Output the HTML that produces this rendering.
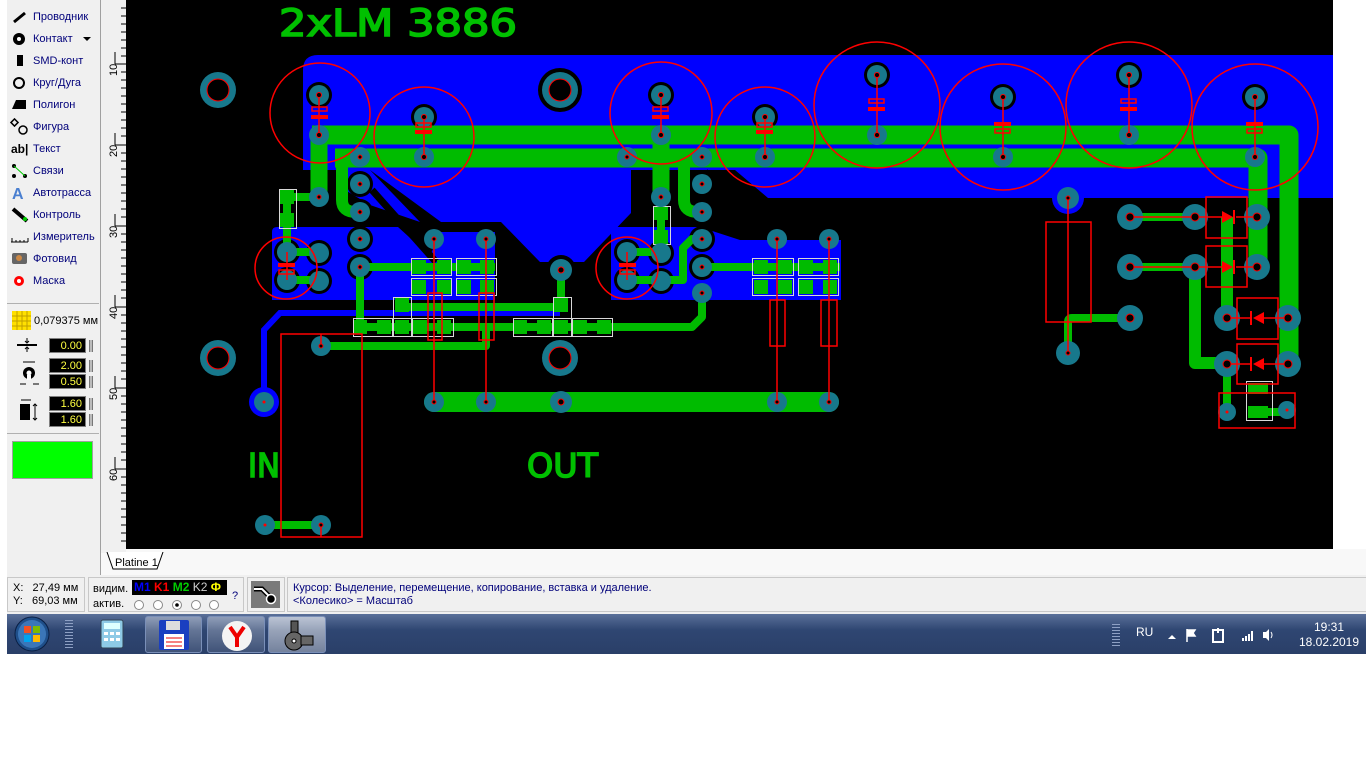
<!DOCTYPE html>
<html><head><meta charset="utf-8"><style>
*{margin:0;padding:0;box-sizing:border-box}
body{width:1366px;height:768px;background:#fff;position:relative;overflow:hidden;font-family:"Liberation Sans","DejaVu Sans",sans-serif}
.abs{position:absolute}
#left{left:7px;top:0;width:94px;height:575px;background:#f0f0f0;border-right:1px solid #a0a0a0}
.mi{position:absolute;left:26px;font-size:11px;color:#00007a}
.fld{position:absolute;left:42px;width:37px;height:15px;background:#000;color:#ffff40;font-size:11px;text-align:right;padding-right:3px;line-height:15px;border:1px solid #808080}
.sl{position:absolute;left:82px;width:4px;height:12px;background:linear-gradient(90deg,#555,#ddd,#555)}
#status{left:7px;top:575px;width:1359px;height:39px;background:#f0f0f0;font-size:11px}
.box{position:absolute;top:2px;height:35px;border:1px solid #c8c8c8}
#task{left:7px;top:614px;width:1359px;height:40px;background:linear-gradient(180deg,#5a7099 0%,#2f4672 40%,#2a3f68 100%)}
.tb{position:absolute;top:2px;height:37px;border:1px solid #7a8fb8;border-radius:3px;background:linear-gradient(180deg,rgba(255,255,255,.35),rgba(255,255,255,.1))}
</style></head><body>

<div id="left" class="abs">
  <svg class="abs" style="left:0;top:0" width="94" height="300">
    <line x1="7" y1="22" x2="18" y2="13" stroke="#000" stroke-width="3"/>
    <circle cx="12" cy="39" r="6" fill="#000"/><circle cx="12" cy="39" r="2" fill="#fff"/>
    <path d="M76 37 h8 l-4 4z" fill="#000"/>
    <rect x="10" y="55" width="6" height="11" fill="#000"/>
    <circle cx="12" cy="83" r="5" fill="none" stroke="#000" stroke-width="2"/>
    <path d="M5 109 L9 100 H19 V109 Z" fill="#000"/>
    <rect x="5" y="120" width="5" height="5" transform="rotate(45 7.5 122.5)" fill="none" stroke="#000" stroke-width="1.5"/>
    <circle cx="16" cy="130" r="4" fill="none" stroke="#000" stroke-width="1.5"/>
    <text x="4" y="153" font-size="12" font-weight="bold" font-family="Liberation Sans">ab|</text>
    <circle cx="7" cy="166" r="2" fill="#000"/><circle cx="7" cy="176" r="2" fill="#000"/><circle cx="18" cy="176" r="2" fill="#000"/><line x1="7" y1="166" x2="18" y2="176" stroke="#0c0"/>
    <text x="5" y="199" font-size="16" font-weight="bold" fill="#4a7fd0" font-family="Liberation Sans">A</text>
    <line x1="6" y1="209" x2="20" y2="221" stroke="#000" stroke-width="4"/><circle cx="18" cy="219" r="2" fill="#0c0"/>
    <path d="M4 242 H21 M5 242 V238 M9 242 V240 M13 242 V240 M17 242 V240 M21 242 V238" stroke="#000" stroke-width="1"/>
    <rect x="5" y="253" width="15" height="11" rx="2" fill="#666"/><circle cx="12" cy="258" r="3" fill="#c84"/>
    <circle cx="12" cy="281" r="5" fill="#f00"/><circle cx="12" cy="281" r="2" fill="#fff"/>
  </svg>
  <div class="mi" style="top:11px">Проводник</div>
  <div class="mi" style="top:33px">Контакт</div>
  <div class="mi" style="top:55px">SMD-конт</div>
  <div class="mi" style="top:77px">Круг/Дуга</div>
  <div class="mi" style="top:99px">Полигон</div>
  <div class="mi" style="top:121px">Фигура</div>
  <div class="mi" style="top:143px">Текст</div>
  <div class="mi" style="top:165px">Связи</div>
  <div class="mi" style="top:187px">Автотрасса</div>
  <div class="mi" style="top:209px">Контроль</div>
  <div class="mi" style="top:231px">Измеритель</div>
  <div class="mi" style="top:253px">Фотовид</div>
  <div class="mi" style="top:275px">Маска</div>
  <div class="abs" style="left:0;top:303px;width:92px;border-top:1px solid #b0b0b0"></div>
  <svg class="abs" style="left:5px;top:311px" width="20" height="20"><rect width="19" height="19" fill="#ffe000"/><path d="M0 5H19M0 10H19M0 15H19M5 0V19M10 0V19M15 0V19" stroke="#c0a000"/></svg>
  <div class="abs" style="left:27px;top:315px;font-size:11px;color:#000">0,079375 мм</div>
  <svg class="abs" style="left:8px;top:336px" width="30" height="92">
    <line x1="2" y1="9" x2="22" y2="9" stroke="#000" stroke-width="2"/><path d="M12 2v4M10 5l2 2 2-2M12 16v-4M10 13l2-2 2 2" stroke="#000" fill="none"/>
    <circle cx="14" cy="37" r="6" fill="#000"/><circle cx="14" cy="37" r="2.5" fill="#fff"/><rect x="12" y="39" width="4" height="5" fill="#fff"/>
    <path d="M8 26h12M5 48h6M18 48h6" stroke="#000"/>
    <rect x="5" y="68" width="10" height="16" fill="#000"/><path d="M20 68v16M18 70l2-2 2 2M18 82l2 2 2-2M6 64h10" stroke="#000" fill="none"/>
  </svg>
  <div class="fld" style="top:338px">0.00</div><div class="sl" style="top:340px"></div>
  <div class="fld" style="top:358px">2.00</div><div class="sl" style="top:360px"></div>
  <div class="fld" style="top:374px">0.50</div><div class="sl" style="top:376px"></div>
  <div class="fld" style="top:396px">1.60</div><div class="sl" style="top:398px"></div>
  <div class="fld" style="top:412px">1.60</div><div class="sl" style="top:414px"></div>
  <div class="abs" style="left:0;top:433px;width:92px;border-top:1px solid #b0b0b0"></div>
  <div class="abs" style="left:5px;top:441px;width:81px;height:38px;background:#00ff00;border:1px solid #a0a0a0"></div>
</div>

<svg class="abs" style="left:101px;top:0" width="25" height="549">
  <rect width="25" height="549" fill="#f0f0f0"/>
  <g stroke="#000">
    <path d="M20 8h5M20 16h5M20 24h5M20 32h5M20 40h5M20 48h5M14 64h11M20 56h5M20 72h5M20 80h5M20 88h5M20 96h5M20 104h5M20 112h5M20 120h5M20 128h5M20 136h5M14 145h11M20 153h5M20 161h5M20 169h5M20 177h5M20 185h5M20 193h5M20 201h5M20 209h5M20 217h5M14 226h11M20 234h5M20 242h5M20 250h5M20 258h5M20 266h5M20 274h5M20 282h5M20 290h5M20 298h5M14 307h11M20 315h5M20 323h5M20 331h5M20 339h5M20 347h5M20 355h5M20 363h5M20 371h5M20 379h5M14 388h11M20 396h5M20 404h5M20 412h5M20 420h5M20 428h5M20 436h5M20 444h5M20 452h5M20 460h5M14 469h11M20 477h5M20 485h5M20 493h5M20 501h5M20 509h5M20 517h5M20 525h5M20 533h5M20 541h5"/>
    <path d="M14 52v12M14 133v12M14 214v12M14 295v12M14 376v12M14 457v12"/>
  </g>
  <g font-size="11" fill="#000" font-family="Liberation Sans">
    <text transform="translate(16,76) rotate(-90)">10</text>
    <text transform="translate(16,157) rotate(-90)">20</text>
    <text transform="translate(16,238) rotate(-90)">30</text>
    <text transform="translate(16,319) rotate(-90)">40</text>
    <text transform="translate(16,400) rotate(-90)">50</text>
    <text transform="translate(16,481) rotate(-90)">60</text>
  </g>
</svg>

<svg class="abs" style="left:0;top:0" width="1366" height="549">
  <rect x="126" y="0" width="1207" height="549" fill="#000"/>
  <g fill="#0000ff">
    <path d="M318 55 H1333 V198 H768 L735 170 H631 V213 L584 262 H540 L501 222 H441 L370 170 H303 V70 Q303 55 318 55Z"/>
    <path d="M272 232 Q272 227 277 227 H398 L430 256 L440 232 H495 V300 H272Z"/>
    <path d="M611 227 H700 L740 240 H841 V300 H611Z"/>
    <path d="M345 170 H370 L420 222 L370 205 L345 190Z"/>
  </g>
  <g fill="none" stroke="#000" stroke-width="7">
    <path d="M705 172 L780 237"/>
    <path d="M372 190 L436 262"/>
  </g>
  <path d="M264 402 V330 L280 313 H560" fill="none" stroke="#0000ff" stroke-width="6"/>
  <circle cx="264" cy="402" r="15" fill="#0000ff"/>
  <circle cx="1068" cy="198" r="16" fill="#0000ff"/>
  <g fill="#000">
    <circle cx="319" cy="95" r="13"/><circle cx="424" cy="117" r="13"/><circle cx="661" cy="95" r="13"/><circle cx="765" cy="117" r="13"/>
    <circle cx="877" cy="75" r="13"/><circle cx="1003" cy="97" r="13"/><circle cx="1129" cy="75" r="13"/><circle cx="1255" cy="97" r="13"/>
    <circle cx="560" cy="90" r="22"/><circle cx="561" cy="270" r="15"/>
    <circle cx="360" cy="184" r="13"/><circle cx="360" cy="212" r="13"/><circle cx="360" cy="239" r="13"/><circle cx="360" cy="267" r="13"/>
    <circle cx="702" cy="184" r="13"/><circle cx="702" cy="212" r="13"/><circle cx="702" cy="239" r="13"/><circle cx="702" cy="267" r="13"/>
    <circle cx="319" cy="253" r="13"/><circle cx="319" cy="281" r="13"/><circle cx="287" cy="252" r="13"/><circle cx="287" cy="280" r="13"/>
    <circle cx="627" cy="252" r="13"/><circle cx="627" cy="280" r="13"/><circle cx="661" cy="253" r="13"/><circle cx="661" cy="281" r="13"/>
  </g>
  <g fill="none" stroke="#00bb00" stroke-linejoin="round">
    <path d="M312 135 H1289 V368" stroke-width="19"/>
    <path d="M335 158 H1258 V267" stroke-width="19"/>
    <path d="M319 135 V197" stroke-width="17"/>
    <path d="M661 135 V197" stroke-width="17"/>
    <path d="M342 160 V200 Q342 212 356 212" stroke-width="12"/>
    <path d="M684 160 V200 Q684 212 698 212" stroke-width="12"/>
    <path d="M434 402 H829" stroke-width="20" stroke-linecap="round"/>
    <path d="M1227 217 V318" stroke-width="12"/>
    <path d="M1195 267 V363 H1227" stroke-width="12"/>
    <g stroke-width="8">
      <path d="M287 197 H319 M287 197 V252 M287 252 H319 M287 280 H319"/>
      <path d="M360 267 H495 M360 267 V327 H692 L702 317 V293"/>
      <path d="M400 307 H561 V270"/>
      <path d="M321 346 H486 V327"/>
      <path d="M627 252 H661 M627 280 H683 V248 L692 239 H702"/>
      <path d="M702 267 H840"/>
      <path d="M661 197 V245"/>
      <path d="M1130 217 H1195 M1130 267 H1195"/>
      <path d="M1068 353 V322 Q1068 318 1072 318 H1130"/>
      <path d="M265 525 H321"/>
      <path d="M1227 364 V412"/>
      <path d="M1258 412 H1287"/>
    </g>
  </g>
  <g fill="#00bb00">
    <rect x="280" y="190" width="14" height="14"/><rect x="280" y="213" width="14" height="14"/>
    <rect x="654" y="206" width="14" height="14"/><rect x="654" y="230" width="14" height="14"/>
    <rect x="412" y="260" width="14" height="14"/><rect x="437" y="260" width="14" height="14"/><rect x="457" y="260" width="14" height="14"/><rect x="480" y="260" width="14" height="14"/>
    <rect x="412" y="280" width="14" height="14"/><rect x="437" y="280" width="14" height="14"/><rect x="457" y="280" width="14" height="14"/><rect x="480" y="280" width="14" height="14"/>
    <rect x="754" y="260" width="14" height="14"/><rect x="778" y="260" width="14" height="14"/><rect x="799" y="260" width="14" height="14"/><rect x="823" y="260" width="14" height="14"/>
    <rect x="754" y="280" width="14" height="14"/><rect x="778" y="280" width="14" height="14"/><rect x="799" y="280" width="14" height="14"/><rect x="823" y="280" width="14" height="14"/>
    <rect x="353" y="320" width="14" height="14"/><rect x="377" y="320" width="14" height="14"/><rect x="395" y="320" width="14" height="14"/><rect x="413" y="320" width="14" height="14"/><rect x="437" y="320" width="14" height="14"/>
    <rect x="513" y="320" width="14" height="14"/><rect x="537" y="320" width="14" height="14"/><rect x="554" y="320" width="14" height="14"/><rect x="573" y="320" width="14" height="14"/><rect x="597" y="320" width="14" height="14"/>
    <rect x="395" y="298" width="14" height="14"/><rect x="554" y="298" width="14" height="14"/>
    <rect x="1248" y="383" width="20" height="11"/><rect x="1248" y="406" width="20" height="12"/>
  </g>
  <g fill="none" stroke="#d8d8d8" stroke-width="1">
    <rect x="279.5" y="189.5" width="17" height="39"/><rect x="653.5" y="206.5" width="17" height="38"/>
    <rect x="411.5" y="258.5" width="40" height="17"/><rect x="456.5" y="258.5" width="40" height="17"/>
    <rect x="411.5" y="278.5" width="40" height="17"/><rect x="456.5" y="278.5" width="40" height="17"/>
    <rect x="752.5" y="258.5" width="41" height="17"/><rect x="798.5" y="258.5" width="40" height="17"/>
    <rect x="752.5" y="278.5" width="41" height="17"/><rect x="798.5" y="278.5" width="40" height="17"/>
    <rect x="353.5" y="318.5" width="39" height="18"/><rect x="393.5" y="318.5" width="18" height="18"/><rect x="412.5" y="318.5" width="41" height="18"/>
    <rect x="513.5" y="318.5" width="39" height="18"/><rect x="553.5" y="318.5" width="18" height="18"/><rect x="572.5" y="318.5" width="40" height="18"/>
    <rect x="393.5" y="297.5" width="18" height="21"/><rect x="553.5" y="297.5" width="18" height="21"/>
    <rect x="1246.5" y="381.5" width="26" height="39"/>
  </g>
  <g>
    <circle cx="218" cy="90" r="18" fill="#17788c"/><circle cx="218" cy="90" r="11" fill="#000" stroke="#f00"/>
    <circle cx="560" cy="90" r="18" fill="#17788c"/><circle cx="560" cy="90" r="11" fill="#000" stroke="#f00"/>
    <circle cx="218" cy="358" r="18" fill="#17788c"/><circle cx="218" cy="358" r="11" fill="#000" stroke="#f00"/>
    <circle cx="560" cy="358" r="18" fill="#17788c"/><circle cx="560" cy="358" r="11" fill="#000" stroke="#f00"/>
  </g>
  <g fill="#17788c">
    <circle cx="319" cy="95" r="10"/><circle cx="319" cy="135" r="10"/><circle cx="424" cy="117" r="10"/><circle cx="424" cy="157" r="10"/>
    <circle cx="661" cy="95" r="10"/><circle cx="661" cy="135" r="10"/><circle cx="765" cy="117" r="10"/><circle cx="765" cy="157" r="10"/>
    <circle cx="877" cy="75" r="10"/><circle cx="877" cy="135" r="10"/><circle cx="1003" cy="97" r="10"/><circle cx="1003" cy="157" r="10"/>
    <circle cx="1129" cy="75" r="10"/><circle cx="1129" cy="135" r="10"/><circle cx="1255" cy="97" r="10"/><circle cx="1255" cy="157" r="10"/>
    <circle cx="360" cy="157" r="10"/><circle cx="360" cy="184" r="10"/><circle cx="360" cy="212" r="10"/><circle cx="360" cy="239" r="10"/><circle cx="360" cy="267" r="10"/>
    <circle cx="319" cy="197" r="10"/><circle cx="319" cy="253" r="10"/><circle cx="319" cy="281" r="10"/><circle cx="287" cy="252" r="10"/><circle cx="287" cy="280" r="10"/>
    <circle cx="434" cy="239" r="10"/><circle cx="486" cy="239" r="10"/><circle cx="561" cy="270" r="11"/>
    <circle cx="561" cy="402" r="11"/><circle cx="434" cy="402" r="10"/><circle cx="486" cy="402" r="10"/><circle cx="777" cy="402" r="10"/><circle cx="829" cy="402" r="10"/>
    <circle cx="321" cy="346" r="10"/><circle cx="264" cy="402" r="10"/>
    <circle cx="627" cy="157" r="10"/><circle cx="702" cy="157" r="10"/><circle cx="702" cy="184" r="10"/><circle cx="702" cy="212" r="10"/><circle cx="702" cy="239" r="10"/><circle cx="702" cy="267" r="10"/><circle cx="702" cy="293" r="10"/>
    <circle cx="661" cy="197" r="10"/><circle cx="661" cy="253" r="10"/><circle cx="661" cy="281" r="10"/><circle cx="627" cy="252" r="10"/><circle cx="627" cy="280" r="10"/>
    <circle cx="777" cy="239" r="10"/><circle cx="829" cy="239" r="10"/>
    <circle cx="1068" cy="198" r="11"/><circle cx="1068" cy="353" r="12"/>
    <circle cx="1130" cy="217" r="13"/><circle cx="1195" cy="217" r="13"/><circle cx="1257" cy="217" r="13"/>
    <circle cx="1130" cy="267" r="13"/><circle cx="1195" cy="267" r="13"/><circle cx="1257" cy="267" r="13"/>
    <circle cx="1130" cy="318" r="13"/>
    <circle cx="1227" cy="318" r="13"/><circle cx="1288" cy="318" r="13"/><circle cx="1227" cy="364" r="13"/><circle cx="1288" cy="364" r="13"/>
    <circle cx="1227" cy="412" r="9"/><circle cx="1287" cy="410" r="9"/>
    <circle cx="265" cy="525" r="10"/><circle cx="321" cy="525" r="10"/>
  </g>
  <g fill="none" stroke="#ff0000" stroke-width="1.5">
    <circle cx="320" cy="113" r="50"/><circle cx="424" cy="137" r="50"/><circle cx="661" cy="113" r="51"/><circle cx="765" cy="137" r="50"/>
    <circle cx="877" cy="105" r="63"/><circle cx="1003" cy="127" r="63"/><circle cx="1129" cy="105" r="63"/><circle cx="1255" cy="127" r="63"/>
    <circle cx="286" cy="268" r="31"/><circle cx="627" cy="268" r="31"/>
    <rect x="281" y="334" width="81" height="203"/>
    <rect x="428" y="293" width="14" height="47"/><rect x="479" y="293" width="15" height="47"/>
    <rect x="770" y="300" width="15" height="46"/><rect x="821" y="300" width="16" height="46"/>
    <rect x="1046" y="222" width="45" height="100"/>
    <rect x="1206" y="197" width="41" height="41"/><rect x="1206" y="246" width="41" height="41"/>
    <rect x="1237" y="298" width="41" height="41"/><rect x="1237" y="344" width="41" height="40"/>
    <rect x="1219" y="393" width="76" height="35"/>
    <path d="M319 95V135M424 117V157M661 95V135M765 117V157M877 75V135M1003 97V157M1129 75V135M1255 97V157"/>
    <path d="M434 239V402M486 239V402M777 239V402M829 239V402M1068 198V353M321 334V346M321 525V537"/>
    <path d="M287 252V280M627 252V280"/>
    <path d="M1130 217H1206M1247 217H1257M1130 267H1206M1247 267H1257M1227 318H1237M1278 318H1288M1227 364H1237M1278 364H1288"/>
    <path d="M1206 217H1222M1236 217H1247M1206 267H1222M1236 267H1247M1237 318H1250M1264 318H1278M1237 364H1250M1264 364H1278"/>
  </g>
  <g fill="#ff0000">
    <rect x="311" y="115" width="17" height="4"/><rect x="415" y="130" width="17" height="4"/><rect x="652" y="115" width="17" height="4"/><rect x="756" y="130" width="17" height="4"/>
    <rect x="868" y="107" width="17" height="4"/><rect x="994" y="122" width="17" height="4"/><rect x="1120" y="107" width="17" height="4"/><rect x="1246" y="122" width="17" height="4"/>
    <rect x="278" y="263" width="17" height="4"/><rect x="619" y="263" width="17" height="4"/>
    <path d="M1222 211 L1233 217 L1222 223Z M1222 261 L1233 267 L1222 273Z M1264 312 L1253 318 L1264 324Z M1264 358 L1253 364 L1264 370Z"/>
    <rect x="1233" y="210" width="2" height="14"/><rect x="1233" y="260" width="2" height="14"/><rect x="1250" y="311" width="2" height="14"/><rect x="1250" y="357" width="2" height="14"/>
  </g>
  <g fill="none" stroke="#ff0000" stroke-width="1.5">
    <rect x="312" y="107" width="15" height="4"/><rect x="416" y="123" width="15" height="4"/><rect x="653" y="107" width="15" height="4"/><rect x="757" y="123" width="15" height="4"/>
    <rect x="869" y="99" width="15" height="4"/><rect x="995" y="129" width="15" height="4"/><rect x="1121" y="99" width="15" height="4"/><rect x="1247" y="129" width="15" height="4"/>
    <rect x="279" y="270" width="15" height="4"/><rect x="620" y="270" width="15" height="4"/>
  </g>
  <g fill="#000" stroke="#f00" stroke-width="1">
    <circle cx="319" cy="95" r="2.5"/><circle cx="319" cy="135" r="2.5"/><circle cx="424" cy="117" r="2.5"/><circle cx="424" cy="157" r="2.5"/>
    <circle cx="661" cy="95" r="2.5"/><circle cx="661" cy="135" r="2.5"/><circle cx="765" cy="117" r="2.5"/><circle cx="765" cy="157" r="2.5"/>
    <circle cx="877" cy="75" r="2.5"/><circle cx="877" cy="135" r="2.5"/><circle cx="1003" cy="97" r="2.5"/><circle cx="1003" cy="157" r="2.5"/>
    <circle cx="1129" cy="75" r="2.5"/><circle cx="1129" cy="135" r="2.5"/><circle cx="1255" cy="97" r="2.5"/><circle cx="1255" cy="157" r="2.5"/>
    <circle cx="360" cy="157" r="2"/><circle cx="360" cy="184" r="2"/><circle cx="360" cy="212" r="2"/><circle cx="360" cy="239" r="2"/><circle cx="360" cy="267" r="2"/>
    <circle cx="319" cy="197" r="2"/><circle cx="434" cy="239" r="2"/><circle cx="486" cy="239" r="2"/><circle cx="561" cy="270" r="3"/>
    <circle cx="561" cy="402" r="3"/><circle cx="434" cy="402" r="2"/><circle cx="486" cy="402" r="2"/><circle cx="777" cy="402" r="2"/><circle cx="829" cy="402" r="2"/>
    <circle cx="321" cy="346" r="2"/><circle cx="627" cy="157" r="2"/><circle cx="702" cy="157" r="2"/><circle cx="702" cy="184" r="2"/><circle cx="702" cy="212" r="2"/><circle cx="702" cy="239" r="2"/><circle cx="702" cy="267" r="2"/><circle cx="702" cy="293" r="2"/>
    <circle cx="661" cy="197" r="2"/><circle cx="777" cy="239" r="2"/><circle cx="829" cy="239" r="2"/>
    <circle cx="1068" cy="198" r="2"/><circle cx="1068" cy="353" r="2"/>
    <circle cx="1130" cy="217" r="4"/><circle cx="1195" cy="217" r="4"/><circle cx="1257" cy="217" r="4"/><circle cx="1130" cy="267" r="4"/><circle cx="1195" cy="267" r="4"/><circle cx="1257" cy="267" r="4"/><circle cx="1130" cy="318" r="4"/>
    <circle cx="1227" cy="318" r="4"/><circle cx="1288" cy="318" r="4"/><circle cx="1227" cy="364" r="4"/><circle cx="1288" cy="364" r="4"/>
    <circle cx="321" cy="525" r="2"/>
  </g>
  <g fill="#f00"><circle cx="265" cy="525" r="1.5"/><circle cx="264" cy="402" r="1.5"/><circle cx="1227" cy="412" r="1.5"/><circle cx="1287" cy="410" r="1.5"/></g>
  <g fill="#00c000" stroke="#00c000" stroke-width="1.6" font-family="DejaVu Sans, Liberation Sans, sans-serif">
    <text x="279" y="36" font-size="37" textLength="238" lengthAdjust="spacingAndGlyphs">2xLM 3886</text>
    <text x="248" y="477" font-size="33" textLength="32" lengthAdjust="spacingAndGlyphs">IN</text>
    <text x="527" y="477" font-size="33" textLength="71" lengthAdjust="spacingAndGlyphs">OUT</text>
  </g>
</svg>

<div class="abs" style="left:101px;top:549px;width:1265px;height:26px;background:#f8f8f8"></div>
<div class="abs" style="left:101px;top:549px;width:25px;height:4px;background:#f0f0f0"></div>
<svg class="abs" style="left:105px;top:552px" width="60" height="20"><path d="M2 0 L8 17 H52 L58 0" fill="#fff" stroke="#000"/><text x="10" y="14" font-size="11" font-family="Liberation Sans">Platine 1</text></svg>

<div id="status" class="abs">
  <div class="box" style="left:0;width:78px"><div style="position:absolute;left:5px;top:4px;line-height:13px">X:&nbsp;&nbsp;&nbsp;27,49 мм<br>Y:&nbsp;&nbsp;&nbsp;69,03 мм</div></div>
  <div class="box" style="left:81px;width:156px">
    <div style="position:absolute;left:4px;top:5px">видим.</div>
    <div style="position:absolute;left:4px;top:20px">актив.</div>
    <div style="position:absolute;left:43px;top:2px;width:95px;height:15px;background:#000;font-weight:bold;font-size:12px;line-height:15px;padding-left:2px;white-space:nowrap"><span style="color:#00f">M1</span> <span style="color:#f00">K1</span> <span style="color:#0c0">M2</span> <span style="color:#ccc;font-weight:normal">K2</span> <span style="color:#ff0">Ф</span></div>
    <svg style="position:absolute;left:43px;top:20px" width="100" height="13"><g fill="#fff" stroke="#888"><circle cx="7" cy="7" r="4.5"/><circle cx="26" cy="7" r="4.5"/><circle cx="45" cy="7" r="4.5"/><circle cx="64" cy="7" r="4.5"/><circle cx="82" cy="7" r="4.5"/></g><circle cx="45" cy="7" r="1.8" fill="#000"/></svg>
    <div style="position:absolute;left:143px;top:12px;color:#00007a">?</div>
  </div>
  <div class="box" style="left:240px;width:38px"><svg style="position:absolute;left:3px;top:3px" width="29" height="27"><rect width="29" height="27" fill="#7a7a7a"/><path d="M3 8 H11 L19 16" stroke="#000" stroke-width="5" fill="none"/><path d="M3 8 H11 L19 16" stroke="#fff" stroke-width="2" fill="none"/><circle cx="20" cy="18" r="4.5" fill="#000" stroke="#fff" stroke-width="1.5"/></svg></div>
  <div class="box" style="left:280px;width:1079px;border-right:none"><div style="position:absolute;left:5px;top:4px;line-height:13px;color:#00007a">Курсор: Выделение, перемещение, копирование, вставка и удаление.<br>&lt;Колесико&gt; = Масштаб</div></div>
</div>

<div id="task" class="abs">
  <svg class="abs" style="left:5px;top:1px" width="40" height="38"><circle cx="20" cy="19" r="17" fill="#1f4f8a" stroke="#0a1f44"/><circle cx="20" cy="19" r="14" fill="#3b76b8"/><rect x="12" y="11" width="7" height="7" fill="#f25022"/><rect x="21" y="11" width="7" height="7" fill="#7fba00"/><rect x="12" y="20" width="7" height="7" fill="#00a4ef"/><rect x="21" y="20" width="7" height="7" fill="#ffb900"/></svg>
  <div class="abs" style="left:58px;top:6px;width:8px;height:28px;background:repeating-linear-gradient(0deg,#8ea0c4 0 1px,transparent 1px 3px)"></div>
  <svg class="abs" style="left:93px;top:5px" width="26" height="30"><rect x="1" y="1" width="22" height="28" rx="2" fill="#8ecae6" stroke="#345"/><rect x="4" y="4" width="16" height="6" fill="#dff"/><g fill="#fff"><rect x="4" y="13" width="4" height="3"/><rect x="10" y="13" width="4" height="3"/><rect x="16" y="13" width="4" height="3"/><rect x="4" y="19" width="4" height="3"/><rect x="10" y="19" width="4" height="3"/><rect x="16" y="19" width="4" height="3"/></g></svg>
  <div class="tb" style="left:138px;width:57px"><svg style="position:absolute;left:13px;top:3px" width="30" height="30"><rect width="30" height="30" rx="2" fill="#1a3fc0"/><rect x="7" y="1" width="14" height="9" fill="#ddd"/><rect x="5" y="14" width="20" height="15" fill="#fff"/><path d="M7 18h16M7 22h16M7 26h16" stroke="#e00"/></svg></div>
  <div class="tb" style="left:200px;width:58px"><svg style="position:absolute;left:13px;top:3px" width="32" height="32"><circle cx="16" cy="16" r="15" fill="#f4f4f4"/><path d="M9 7 L16 17 L23 7 M16 17 V27" stroke="#e00" stroke-width="4" fill="none"/></svg></div>
  <div class="tb" style="left:261px;width:58px;background:linear-gradient(180deg,rgba(255,255,255,.6),rgba(255,255,255,.35))"><svg style="position:absolute;left:12px;top:2px" width="34" height="34"><rect x="10" y="2" width="7" height="12" fill="#555" stroke="#000"/><circle cx="13" cy="22" r="9" fill="#666" stroke="#000"/><circle cx="13" cy="22" r="2" fill="#fff" stroke="#000"/><rect x="20" y="17" width="12" height="9" fill="#666" stroke="#000"/></svg></div>
  <div class="abs" style="left:1105px;top:8px;width:8px;height:24px;background:repeating-linear-gradient(0deg,#8ea0c4 0 1px,transparent 1px 3px)"></div>
  <div class="abs" style="left:1129px;top:11px;color:#fff;font-size:12px">RU</div>
  <svg class="abs" style="left:1158px;top:13px" width="110" height="16"><path d="M3 12 L7 8 L11 12Z" fill="#fff"/><path d="M22 2 V15 M22 3 H30 L28 6 L30 9 H22" stroke="#fff" fill="#fff" stroke-width="1.5"/><rect x="48" y="3" width="10" height="12" fill="none" stroke="#fff" stroke-width="2"/><rect x="52" y="1" width="2" height="5" fill="#fff"/><g fill="#fff"><rect x="77" y="11" width="2" height="3"/><rect x="80" y="9" width="2" height="5"/><rect x="83" y="7" width="2" height="7"/><rect x="86" y="4" width="2" height="10"/></g><path d="M98 5 H101 L104 2 V14 L101 11 H98Z" fill="#fff"/><path d="M106 5 Q108 8 106 11" stroke="#fff" fill="none"/></svg>
  <div class="abs" style="left:1290px;top:6px;color:#fff;font-size:12px;text-align:center;width:64px;line-height:15px">19:31<br>18.02.2019</div>
</div>
</body></html>
